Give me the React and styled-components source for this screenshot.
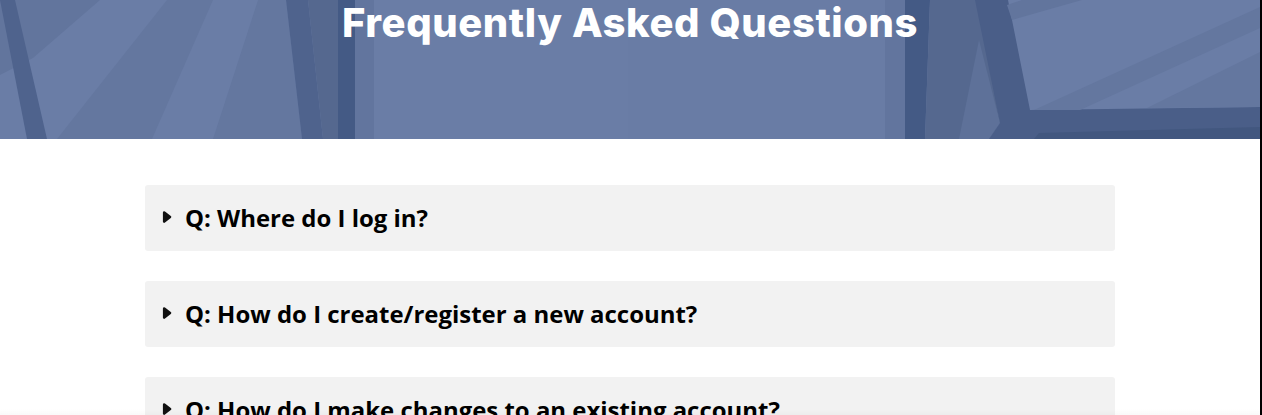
import React from "react";
import styled, { createGlobalStyle } from "styled-components";

const Global = createGlobalStyle`
  html, body { margin: 0; padding: 0; background: #fff; height: 100%; overflow: hidden; }
  #root { height: 100%; }
`;
const Page = styled.div`
  position: relative; height: 415px; overflow: hidden; background: #fff;
  border-right: 2px solid #000; box-sizing: border-box;
`;
const Hero = styled.header`
  position: relative; height: 139px; background: #6a7da6; display: flex; justify-content: center; overflow: hidden;
`;
const HeroArt = styled.svg`
  position: absolute; inset: 0; width: 100%; height: 100%;
`;
const Title = styled.h1`
  position: relative; margin: 0; height: 46px; line-height: 46px;
  font-family: Inter, "Open Sans", sans-serif; font-weight: 800; font-size: 40px; letter-spacing: 0.58px; color: #fff; white-space: nowrap;
`;
const List = styled.main`
  width: 970px; margin: 46px 0 0 145px; display: flex; flex-direction: column; gap: 30px;
`;
const Item = styled.div`
  height: 66px; box-sizing: border-box; background: #f2f2f2; border-radius: 3px;
  display: flex; align-items: center; padding: 0 0 2px 17px; flex: none;
  font-family: "Open Sans", sans-serif; font-weight: 700; font-size: 23.95px; color: #000; white-space: nowrap;
`;
const Marker = styled.svg`
  width: 10px; height: 14px; margin-right: 13px; flex: none;
`;
const BottomFade = styled.div`
  position: absolute; left: 0; right: 0; bottom: 0; height: 6px; background: linear-gradient(rgba(0,0,0,0), rgba(0,0,0,0.025));
`;

const shapes = [
  ["#62759d", "15,0 100,0 33,58 0,75 0,0"],
  ["#64779f", "167,0 213,0 152,139 57,139"],
  ["#64779f", "258,0 286,0 302,139 213,139"],
  ["#4f638d", "0,0 15,0 47,139 27,139"],
  ["#4f638d", "286,0 308,0 323,139 302,139"],
  ["#55688f", "308,0 338,0 338,139 323,139"],
  ["#445a85", "338,0 355,0 355,139 338,139"],
  ["#62759e", "355,0 374,0 374,139 355,139"],
  ["#697ca5", "628,0 885,0 885,139 628,139"],
  ["#62759e", "885,0 905,0 905,139 885,139"],
  ["#445a85", "905,0 930,0 925,139 905,139"],
  ["#55688f", "930,0 980,0 1000,123 989,139 925,139"],
  ["#5e7199", "979,40 1000,123 989,139 959,139"],
  ["#4a5e88", "975,0 1008,0 1030,110 1260,107 1260,139 989,139 1000,123"],
  ["#42577f", "1034,139 1039,133 1260,127 1260,139"],
  ["#62759d", "1007,5 1022,0 1082,0 1012,20"],
  ["#64779f", "1260,7 1260,28 1080,110 1034,110"],
  ["#64779f", "1260,52 1260,107 1147,108"],
];

const questions = [
  "Q: Where do I log in?",
  "Q: How do I create/register a new account?",
  "Q: How do I make changes to an existing account?",
];

export default function App() {
  return (
    <Page>
      <Global />
      <Hero>
        <HeroArt viewBox="0 0 1260 139" preserveAspectRatio="none">
          {shapes.map(([fill, points]) => <polygon key={points} fill={fill} points={points} />)}
        </HeroArt>
        <Title>Frequently Asked Questions</Title>
      </Hero>
      <List>
        {questions.map((q) => (
          <Item key={q}>
            <Marker viewBox="0 0 10 14">
              <path d="M2.2 2.5 L8 7 L2.2 11.5 Z" fill="#111" stroke="#111" strokeWidth="2.6" strokeLinejoin="round" />
            </Marker>
            {q}
          </Item>
        ))}
      </List>
      <BottomFade />
    </Page>
  );
}
